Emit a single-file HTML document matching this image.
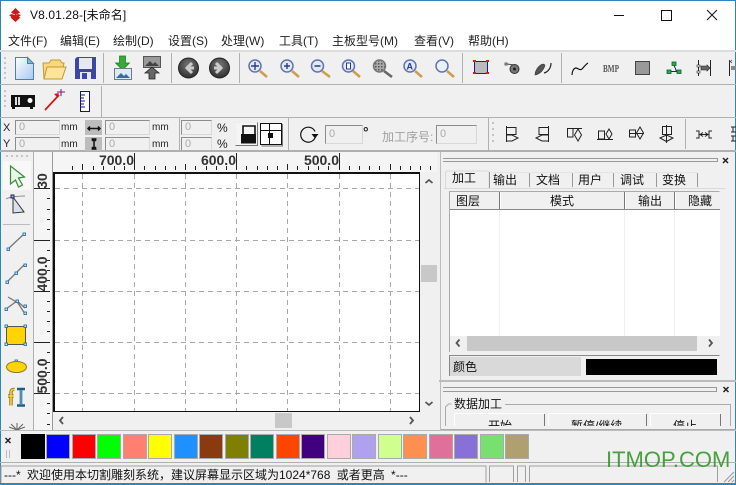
<!DOCTYPE html>
<html><head><meta charset="utf-8"><style>
html,body{margin:0;padding:0;width:736px;height:485px;overflow:hidden;background:#f0f0f0}
body{position:relative;font-family:"Liberation Sans","Noto Sans CJK SC",sans-serif;font-size:12px;color:#222}
.a{position:absolute;white-space:nowrap}
.r{position:absolute}
.inp{position:absolute;background:#f0f0f0;border:1px solid #8c8c8c;border-right-color:#d8d8d8;border-bottom-color:#d8d8d8;box-sizing:border-box;color:#aaa;font-size:11px;line-height:13px;padding-left:3px}
.m{font-size:12px;line-height:16px;top:33px}
.rl{font:bold 14px "Liberation Sans",sans-serif;line-height:16px;color:#333;top:152px;text-align:right;width:50px}
.rv{position:absolute;width:0;height:0;left:41.500px}
.rv div{transform:translate(-50%,-50%) rotate(-90deg);width:44px;text-align:center;font:bold 14px "Liberation Sans",sans-serif;line-height:16px;color:#333;white-space:nowrap}
svg{position:absolute;left:0;top:0}
</style></head><body>
<div class="r" style="left:0;top:0;width:736px;height:50px;background:#fff"></div>
<div class="a" style="left:30px;top:7px;font-size:12px;line-height:16px;color:#111;letter-spacing:.12px">V8.01.28-[未命名]</div>
<div class="a m" style="left:8px">文件(F)</div>
<div class="a m" style="left:60px">编辑(E)</div>
<div class="a m" style="left:113px">绘制(D)</div>
<div class="a m" style="left:168px">设置(S)</div>
<div class="a m" style="left:221px">处理(W)</div>
<div class="a m" style="left:279px">工具(T)</div>
<div class="a m" style="left:332px">主板型号(M)</div>
<div class="a m" style="left:414px">查看(V)</div>
<div class="a m" style="left:468px">帮助(H)</div>

<!-- canvas background etc -->
<div class="r" style="left:33px;top:152px;width:404px;height:20px;background:#f5f5f5"></div>
<div class="r" style="left:33px;top:172px;width:19px;height:258px;background:#f5f5f5"></div>
<div class="r" style="left:53px;top:172px;width:367px;height:240px;background:#fff;border-top:2px solid #111;border-left:2px solid #111;border-right:1px solid #111;border-bottom:1px solid #111;box-sizing:border-box"></div>
<div class="r" style="left:450px;top:209px;width:270px;height:127px;background:#fff"></div>
<div class="r" style="left:450px;top:357px;width:131px;height:19px;background:#d9d9d9"></div>
<div class="r" style="left:586px;top:359px;width:131px;height:16px;background:#000"></div>
<div class="r" style="left:467px;top:336px;width:230px;height:15px;background:#c8c8c8"></div>
<div class="r" style="left:421px;top:265px;width:16px;height:17px;background:#c8c8c8"></div>
<div class="r" style="left:275px;top:413px;width:17px;height:15px;background:#c8c8c8"></div>

<!-- inputs -->
<div class="inp" style="left:15px;top:120px;width:45px;height:15px">0</div>
<div class="inp" style="left:15px;top:137px;width:45px;height:14px">0</div>
<div class="inp" style="left:105px;top:120px;width:45px;height:15px">0</div>
<div class="inp" style="left:105px;top:137px;width:45px;height:14px">0</div>
<div class="inp" style="left:181px;top:120px;width:31px;height:15px">0</div>
<div class="inp" style="left:181px;top:137px;width:31px;height:14px">0</div>
<div class="inp" style="left:325px;top:125px;width:38px;height:19px;line-height:17px">0</div>
<div class="inp" style="left:436px;top:125px;width:41px;height:19px;line-height:17px">0</div>
<div class="a" style="left:3px;top:122px;font-size:11px;line-height:13px">X</div>
<div class="a" style="left:3px;top:138px;font-size:11px;line-height:13px">Y</div>
<div class="a" style="left:61px;top:121px;font-size:10px;line-height:13px">mm</div>
<div class="a" style="left:61px;top:138px;font-size:10px;line-height:13px">mm</div>
<div class="a" style="left:152px;top:121px;font-size:10px;line-height:13px">mm</div>
<div class="a" style="left:152px;top:138px;font-size:10px;line-height:13px">mm</div>
<div class="a" style="left:217px;top:122px;font-size:12px;line-height:13px">%</div>
<div class="a" style="left:217px;top:138px;font-size:12px;line-height:13px">%</div>
<div class="a" style="left:363px;top:125px;font-size:14px;line-height:14px;font-weight:bold">°</div>
<div class="a" style="left:382px;top:129px;font-size:12px;line-height:16px;color:#a0a0a0">加工序号:</div>

<!-- rulers -->
<div class="a rl" style="left:84px">700.0</div>
<div class="a rl" style="left:186px">600.0</div>
<div class="a rl" style="left:289px">500.0</div>
<div class="rv" style="top:180.500px"><div>30</div></div>
<div class="rv" style="top:273.500px"><div>400.0</div></div>
<div class="rv" style="top:375.500px"><div>500.0</div></div>

<!-- tabs text -->
<div class="a" style="left:452px;top:170px;font-size:12px;line-height:16px;color:#111">加工</div>
<div class="a" style="left:493px;top:172px;font-size:12px;line-height:16px;color:#111">输出</div>
<div class="a" style="left:536px;top:172px;font-size:12px;line-height:16px;color:#111">文档</div>
<div class="a" style="left:578px;top:172px;font-size:12px;line-height:16px;color:#111">用户</div>
<div class="a" style="left:620px;top:172px;font-size:12px;line-height:16px;color:#111">调试</div>
<div class="a" style="left:662px;top:172px;font-size:12px;line-height:16px;color:#111">变换</div>
<div class="a" style="left:456px;top:194px;font-size:12px;line-height:15px;color:#111">图层</div>
<div class="a" style="left:550px;top:194px;font-size:12px;line-height:15px;color:#111">模式</div>
<div class="a" style="left:638px;top:194px;font-size:12px;line-height:15px;color:#111">输出</div>
<div class="a" style="left:688px;top:194px;font-size:12px;line-height:15px;color:#111">隐藏</div>
<div class="a" style="left:453px;top:359px;font-size:12px;line-height:16px;color:#111">颜色</div>
<div class="a" style="left:454px;top:396px;font-size:12px;line-height:16px;color:#111">数据加工</div>
<div class="r" style="left:443px;top:413px;width:290px;height:13px;overflow:hidden">
<div class="a" style="left:45px;top:5px;font-size:12px;line-height:16px;color:#111">开始</div>
<div class="a" style="left:128px;top:5px;font-size:12px;line-height:16px;color:#111">暂停/继续</div>
<div class="a" style="left:230px;top:5px;font-size:12px;line-height:16px;color:#111">停止</div>
</div>

<!-- status -->
<div class="a" style="left:4px;top:467px;font-size:12px;line-height:16px;color:#111;word-spacing:3px">---* 欢迎使用本切割雕刻系统，建议屏幕显示区域为1024*768 或者更高 *---</div>

<svg width="736" height="485" viewBox="0 0 736 485" xmlns="http://www.w3.org/2000/svg">
<defs>
<radialGradient id="g" cx=".5" cy=".35" r=".7"><stop offset="0" stop-color="#777"/><stop offset="1" stop-color="#2a2a2a"/></radialGradient>
<linearGradient id="pg" x1="0" y1="0" x2="1" y2="1"><stop offset="0" stop-color="#fff"/><stop offset="1" stop-color="#a8c8ee"/></linearGradient>
<pattern id="dots" width="3" height="3" patternUnits="userSpaceOnUse"><rect width="3" height="3" fill="#aaa"/><rect width="1.500" height="1.500" fill="#555"/></pattern>
</defs>
<!-- window frame -->
<rect x="0" y="0" width="736" height="1" fill="#2e86c1"/><rect x="0" y="0" width="1" height="485" fill="#2e86c1"/><rect x="735" y="0" width="1" height="485" fill="#2e86c1"/><rect x="0" y="483" width="736" height="2" fill="#2e86c1"/>
<!-- logo -->
<g fill="#d01818"><path d="M15.500 8l4.500 4.500-2.500 1.500h-4l-2.500-1.500z"/><path d="M9 15l3-1 3 1.200 3-1.200 3 1-3 2.500h-6z"/><path d="M15.500 22l-5-4.500 2.500-1h5l2.500 1z"/><rect x="14.700" y="9" width="1.600" height="12"/></g>
<!-- win controls -->
<rect x="614" y="15" width="10" height="1" fill="#111"/>
<rect x="661.500" y="10.500" width="10" height="10" fill="none" stroke="#111"/>
<path d="M707 10l10 10M717 10l-10 10" stroke="#111" fill="none"/>
<!-- bars -->
<g fill="#b0b0b0">
<rect x="0" y="50" width="736" height="2" fill="#dcdcdc"/>
<rect x="0" y="84" width="736" height="1"/>
<rect x="0" y="117" width="736" height="1"/>
<rect x="103" y="53" width="1" height="30"/><rect x="171" y="53" width="1" height="30"/><rect x="239" y="53" width="1" height="30"/><rect x="462" y="53" width="1" height="30"/><rect x="561" y="53" width="1" height="30"/>
<rect x="101" y="86" width="1" height="31"/>
<rect x="179" y="118" width="1" height="32"/><rect x="288" y="118" width="1" height="32"/><rect x="488" y="118" width="1" height="32"/><rect x="685" y="119" width="1" height="30"/>
<rect x="0" y="150" width="736" height="2"/>
</g>
<g fill="#c4c4c4"><rect x="4" y="57" width="2" height="2"/><rect x="4" y="62" width="2" height="2"/><rect x="4" y="67" width="2" height="2"/><rect x="4" y="72" width="2" height="2"/><rect x="4" y="77" width="2" height="2"/><rect x="4" y="90" width="2" height="2"/><rect x="4" y="95" width="2" height="2"/><rect x="4" y="100" width="2" height="2"/><rect x="4" y="105" width="2" height="2"/><rect x="492" y="122" width="2" height="2"/><rect x="492" y="128" width="2" height="2"/><rect x="492" y="134" width="2" height="2"/><rect x="492" y="140" width="2" height="2"/></g>

<!-- toolbar 1 icons -->
<path d="M15.500 57.500h12l6 6v16h-18z" fill="url(#pg)" stroke="#4a7fb8"/><path d="M27.500 57.500v6h6z" fill="#8ab4e0" stroke="#4a7fb8"/>
<path d="M44 79l-1-16h6l2-3h9l2 3h2l-3 16z" fill="#f8d878" stroke="#c09838"/><path d="M44 79l3-12h19l-4 12z" fill="#fde49a" stroke="#c09838"/>
<path d="M75 59l2-2h19v22h-21z" fill="#3a46a8"/><rect x="79" y="58" width="13" height="11" fill="#e8e8f0"/><rect x="80" y="72" width="11" height="7" fill="#e8e8f0"/><rect x="82" y="73" width="5" height="6" fill="#3a46a8"/>
<path d="M119.500 56h6v7h4l-7 7-7-7h4z" fill="#38a838" stroke="#1c7a1c" stroke-width=".7"/>
<rect x="114.500" y="68.500" width="17" height="11" fill="#dceaf6" stroke="#6e7a84"/><path d="M116 78l5-5 3 3 2-2 4 4z" fill="#3c6a9c"/>
<rect x="143.500" y="56.500" width="17" height="11" fill="#9a9a9a" stroke="#555"/><path d="M145 66l5-5 3 3 2-2 4 4z" fill="#444"/><path d="M152 67l7 6h-4v6h-6v-6h-4z" fill="#666" stroke="#222" stroke-width=".8"/>
<circle cx="188.500" cy="68" r="10" fill="url(#g)" stroke="#222"/><path d="M192 63l-5 5 5 5M187 68h7" stroke="#ccc" stroke-width="3" fill="none"/>
<circle cx="219.500" cy="68" r="10" fill="url(#g)" stroke="#222"/><path d="M216 63l5 5-5 5M221 68h-7" stroke="#ccc" stroke-width="3" fill="none"/>
<!-- magnifiers -->
<g stroke="#caa050" stroke-width="2.600"><path d="M260 71l7 6M292 71l7 6M322 71l8 6M353 71l7 6M415 71l7 6M447 71l7 6"/></g>
<path d="M384 71l8 6" stroke="#666" stroke-width="2.600"/>
<g fill="#e2e8f6" stroke="#6272b0" stroke-width="1.500">
<circle cx="255" cy="66" r="6"/><circle cx="287" cy="66" r="6"/><circle cx="317.500" cy="66" r="6"/><circle cx="348.500" cy="66" r="6"/><circle cx="410" cy="66" r="6"/><circle cx="442" cy="66" r="6" fill="#e8f0fc"/>
</g>
<circle cx="379.500" cy="66" r="6" fill="url(#dots)" stroke="#777" stroke-width="1.500"/>
<path d="M251 66h8M255 62v8M284 66h6M287 63v6M314.500 66h6" stroke="#22408a" stroke-width="1.400"/>
<rect x="346.500" y="63" width="4" height="6" fill="#fff" stroke="#22408a"/>
<text x="406.500" y="69.500" font-family="Liberation Sans" font-weight="bold" font-size="9" fill="#22408a">A</text>
<!-- node tools -->
<rect x="474.500" y="61.500" width="13" height="12" fill="#bbb" stroke="#1a1a9a"/><g fill="#d02020"><rect x="473" y="60" width="3" height="2"/><rect x="486" y="60" width="3" height="2"/><rect x="473" y="72" width="3" height="2"/><rect x="486" y="72" width="3" height="2"/></g>
<rect x="505" y="63" width="2" height="2" fill="#fff" stroke="#222" stroke-width=".7"/><path d="M507 64l7 1" stroke="#444"/><circle cx="514.500" cy="69" r="4.500" fill="#777" stroke="#333"/><circle cx="514.500" cy="69" r="1.500" fill="#222"/>
<path d="M535 75c0-5 4-10 8-11l2 1c-1 5-5 9-10 10z" fill="#555" stroke="#333" stroke-width=".6"/><path d="M544 73c4-1 7-5 7-10" stroke="#222" fill="none" stroke-width="1.200"/>
<path d="M572 75c0-4 2-7 4-7s4 3 6 1 4-5 6-6" stroke="#111" fill="none" stroke-width="1.200"/>
<text x="603" y="72" font-family="Liberation Serif" font-size="10" font-weight="bold" fill="#555" textLength="16" lengthAdjust="spacingAndGlyphs">BMP</text>
<rect x="635.500" y="61.500" width="14" height="13" fill="#999" stroke="#444"/>
<path d="M674 65l2.500 6.500M669 71.500h10" stroke="#1a1a9a" fill="none"/><g fill="#3a3" stroke="#063" stroke-width=".8"><rect x="672" y="62" width="4" height="3.500"/><rect x="667" y="70" width="4" height="3.500"/><rect x="677" y="70" width="4" height="3.500"/></g>
<path d="M698.500 60v16M710.500 60v16" stroke="#222"/><rect x="697" y="65" width="3" height="2" fill="#fff" stroke="#222" stroke-width=".6"/><rect x="697" y="71" width="3" height="2" fill="#fff" stroke="#222" stroke-width=".6"/><path d="M701 66h6v-1l3 3-3 3v-1h-6z" fill="#666" stroke="#222" stroke-width=".6"/>
<path d="M729.500 60v16" stroke="#222"/><rect x="731" y="66" width="5" height="4" fill="#888"/><path d="M729 60l3 3M732 60l-3 3" stroke="#444" stroke-width=".7"/>

<!-- toolbar 2 -->
<path d="M11 95h24v12h-2v2h-3v-2h-15v2h-3v-2h-1z" fill="#111"/><rect x="15" y="97" width="2" height="8" fill="#ddd"/><rect x="18" y="97" width="2" height="8" fill="#ddd"/><circle cx="30" cy="100.500" r="2.500" fill="#fff"/>
<path d="M45 110l14-15" stroke="#d01818" stroke-width="1.800"/><path d="M59 93l-5 1 3 3z" fill="#d01818"/><path d="M57 92h8M61 89v7" stroke="#80108a"/>
<rect x="80.500" y="91.500" width="9" height="20" fill="#fff" stroke="#14147a"/><path d="M81 95h4M81 98h3M81 101h4M81 104h3M81 107h4" stroke="#14147a"/>

<!-- toolbar 3 buttons -->
<rect x="85" y="120" width="17" height="31" fill="#bcbcbc"/><rect x="85" y="135" width="17" height="2" fill="#f0f0f0"/>
<path d="M88 128.500h12M90 126.500l-2 2 2 2M98 126.500l2 2-2 2" stroke="#111" fill="none" stroke-width="1.500"/><path d="M94 139v10M92 141l2-2 2 2M92 147l2 2 2-2M91.500 139h5M91.500 149h5" stroke="#111" fill="none" stroke-width="1.500"/>
<rect x="235.500" y="122.500" width="22" height="23" fill="#f4f4f4"/><path d="M235.500 145.500v-23h22" stroke="#eee" fill="none"/><path d="M235.500 145.500h22v-23" stroke="#777" fill="none"/>
<rect x="241" y="134" width="15" height="9.500" fill="#111"/><path d="M243 134v-8h12v8" stroke="#111" fill="none" stroke-width="1.600"/>
<rect x="260.500" y="123.500" width="21" height="21" fill="#fff" stroke="#111"/><path d="M261 130.500h20M269.500 124v20" stroke="#111"/><rect x="268" y="133" width="5" height="5" fill="#111"/><path d="M282.500 124v22h-21" stroke="#777" fill="none"/>
<path d="M315 131.500a7.500 7.500 0 1 0 0.500 5" stroke="#111" fill="none" stroke-width="1.200"/><path d="M311.500 134h7l-3.500 4.500z" fill="#111"/>

<!-- align icons -->
<g fill="none" stroke="#222" stroke-width="1">
<path d="M506.500 126v16M507 127.500h9v7h-9M507 135l5 0 6 3-6 3h-5"/>
<path d="M548.500 126v16M548 127.500h-9v7h9M548 135h-6l-6 3 6 3h6"/>
<path d="M567 128.500h15M567.500 129v8h5.500v-8M578 129l3.500 6-3.500 6-3.500-6z"/>
<path d="M597 139.500h16M598.500 131h6v8h-6zM609 129l3 5-3 5-3-5z"/>
<path d="M629 133.500h15M629.500 130h6v7h-6zM640 127l3.500 6-3.500 6-3.500-6z"/>
<path d="M666.500 125v18M662.500 126.500h9v8h-9zM660 138l6.500-3 6.500 3-6.500 3.500z"/>
<path d="M696 131h3v7h-3M699 134.500h9M703 132.500l-3 2 3 2M705 132.500l3 2-3 2M712 131h-3v7h3"/>
<path d="M731 127h5M733 127v5M731 132h5M731 136h5M733 136v5M731 141h5"/>
</g>

<!-- left toolbar -->
<rect x="33" y="152" width="1" height="278" fill="#b0b0b0"/>
<rect x="3" y="161" width="28" height="29" fill="#f8f8f8"/>
<g fill="#c4c4c4"><rect x="6" y="155" width="2" height="2"/><rect x="11" y="155" width="2" height="2"/><rect x="16" y="155" width="2" height="2"/><rect x="21" y="155" width="2" height="2"/><rect x="26" y="155" width="2" height="2"/></g>
<path d="M10.500 166l14 11-6 1 4 7-4 2-3-7-5 4z" fill="#e8f8e8" stroke="#3a8a3a" stroke-width="1.200"/>
<path d="M13 197l11 15-11 1z" fill="#dce0ee" stroke="#333"/><path d="M6 199c3-2 12-3 19-3" stroke="#888" fill="none"/><rect x="11" y="195" width="3" height="3" fill="#9ab" stroke="#226"/>
<rect x="3" y="224" width="27" height="1" fill="#bbb"/>
<g stroke="#777" stroke-width="1.300" fill="none"><path d="M8 249l16-15M7 282l9-9 9-9M6 309l11-8 8 7M8 297l10 6 7 11"/></g>
<g fill="#cfe6f4" stroke="#2f6f9f" stroke-width=".9"><rect x="7" y="248" width="2.500" height="2.500"/><rect x="23" y="233" width="2.500" height="2.500"/><rect x="6" y="281" width="2.500" height="2.500"/><rect x="15" y="272" width="2.500" height="2.500"/><rect x="24" y="264" width="2.500" height="2.500"/><rect x="5" y="308" width="2.500" height="2.500"/><rect x="24" y="312" width="2.500" height="2.500"/><rect x="24" y="305" width="2.500" height="2.500"/><rect x="16" y="300" width="2.500" height="2.500"/></g>
<rect x="6.500" y="326.500" width="19" height="18" fill="#ffd400" stroke="#555"/>
<g fill="#cfe6f4" stroke="#2f6f9f" stroke-width=".9"><rect x="5" y="325" width="2.500" height="2.500"/><rect x="24" y="325" width="2.500" height="2.500"/><rect x="5" y="343" width="2.500" height="2.500"/><rect x="24" y="343" width="2.500" height="2.500"/><rect x="15" y="360" width="2.500" height="2.500"/></g>
<ellipse cx="16.500" cy="367" rx="10" ry="5.500" fill="#ffd400" stroke="#8a7a20"/>
<path d="M14.500 389.500c-2.500-.5-3.500 1-3.500 3v13M8 396h5.500" fill="none" stroke="#8a7820" stroke-width="3.400"/><path d="M14.500 389.500c-2.500-.5-3.500 1-3.500 3v13M8 396h5.500" fill="none" stroke="#ffd030" stroke-width="1.600"/>
<path d="M17 389h8M17 405.500h8M21 389v16.500" stroke="#205c88" stroke-width="2.600" fill="none"/><path d="M21 390v15" stroke="#7ac0e8" stroke-width="1" fill="none"/>
<path d="M17 430l-6-6M17 430l6-6M17 430v-7M17 430l-8-3M17 430l8-3" stroke="#666" fill="none"/>

<!-- ruler ticks top -->
<rect x="52" y="152" width="1" height="20" fill="#999"/>
<g transform="translate(0,-2)"><path d="M72.500 168v4M82.500 166v6M93.500 168v4M103.500 168v4M114.500 168v4M124.500 168v4M134.500 155v17M144.500 168v4M155.500 168v4M165.500 168v4M175.500 168v4M185.500 166v6M195.500 168v4M206.500 168v4M216.500 168v4M226.500 168v4M236.500 155v17M246.500 168v4M257.500 168v4M267.500 168v4M277.500 168v4M287.500 166v6M297.500 168v4M308.500 168v4M318.500 168v4M328.500 168v4M339.500 155v17M349.500 168v4M359.500 168v4M369.500 168v4M379.500 168v4M390.500 166v6M400.500 168v4M410.500 168v4M420.500 168v4M430.500 168v4" stroke="#222" fill="none"/></g>
<path d="M34 188.500h16M47 198.500h3M47 209.500h3M47 219.500h3M47 229.500h3M34 240.500h16M47 250.500h3M47 260.500h3M47 270.500h3M47 280.500h3M34 291.500h16M47 301.500h3M47 311.500h3M47 321.500h3M47 331.500h3M34 342.500h16M47 352.500h3M47 362.500h3M47 372.500h3M47 382.500h3M34 393.500h16M47 403.500h3M47 413.500h3M47 424.500h3" stroke="#222" fill="none"/>
<rect x="52" y="172" width="1" height="258" fill="#999"/>

<!-- dashed grid -->
<g stroke="#a8a8a8" stroke-dasharray="5 4" fill="none">
<path d="M82.500 174v237M134.500 174v237M185.500 174v237M236.500 174v237M287.500 174v237M339.500 174v237M390.500 174v237"/>
<path d="M55 188.500h364M55 240.500h364M55 291.500h364M55 342.500h364M55 393.500h364"/>
</g>
<!-- scroll arrows -->
<g fill="none" stroke="#555" stroke-width="1.800"><path d="M63 417l-3 3.500 3 3.500M410 417l3 3.500-3 3.500M425.500 183l3.500-3 3.500 3M425.500 402l3.500 3 3.500-3"/>
<path d="M459.500 339.500l-3 3.500 3 3.500M709 339.500l3 3.500-3 3.500"/></g>

<!-- right panel -->
<rect x="440" y="152" width="1" height="278" fill="#bbb"/>
<path d="M443 158.500h274M443 161.500h274M717.500 158v4" stroke="#999" fill="none"/>
<path d="M723 158l5 5M728 158l-5 5" stroke="#222" stroke-width="1.500"/>
<!-- tabs -->
<path d="M445.500 188v-16l1.500-1h41l1 1v16" fill="none" stroke="#dadada"/><path d="M489.500 172v16" stroke="#999"/>
<path d="M491 172.500h38M531 172.500h41M574 172.500h39M615 172.500h41M658 172.500h39" fill="none" stroke="#e4e4e4"/>
<path d="M529.500 173v14M572.500 173v14M613.500 173v14M656.500 173v14M697.500 173v14" stroke="#999" fill="none"/>
<rect x="444" y="188" width="282" height="1" fill="#dadada"/>
<!-- table -->
<path d="M449.500 352v-160.500h270" fill="none" stroke="#aaa"/>
<path d="M450 209.500h270" stroke="#888"/>
<path d="M499.500 192v17M624.500 192v17M674.500 192v17" stroke="#777" fill="none"/>
<path d="M500.500 192v17M625.500 192v17M675.500 192v17" stroke="#fff" fill="none"/>
<path d="M499.500 210v126M624.500 210v126M674.500 210v126" stroke="#efefef" fill="none"/>
<path d="M449.500 376v-20.500h270" stroke="#888" fill="none"/>
<!-- panel 2 -->
<rect x="439" y="380" width="297" height="2" fill="#bbb"/>
<path d="M443 387.500h273M443 391.500h273M716.500 387v5" stroke="#999" fill="none"/>
<path d="M723.500 387l5 5M728.500 387l-5 5" stroke="#222" stroke-width="1.500"/>
<path d="M445.500 426v-19l3-3h3M505 404.500h225.500v21.500" stroke="#aaa" fill="none"/>
<path d="M454.500 426v-12.500h90M548.500 426v-12.500h98M650.500 426v-12.500h69" fill="none" stroke="#fff"/>
<path d="M544.500 414v12M646.500 414v12M720.500 414v12" stroke="#777" fill="none"/>
<rect x="441" y="429" width="295" height="1" fill="#aaa"/>
<rect x="0" y="430" width="736" height="1" fill="#bbb"/>

<!-- color bar -->
<path d="M5.500 438l5 5M10.500 438l-5 5" stroke="#222" stroke-width="1.500"/>
<path d="M6.500 450v8M9.500 450v8" stroke="#bbb"/>
<g stroke="#aaa" stroke-width="1">
<rect x="21.500" y="434.500" width="23" height="24" fill="#000" stroke="#000"/>
<rect x="46.500" y="434.500" width="23" height="24" fill="#0000ff"/>
<rect x="72.500" y="434.500" width="23" height="24" fill="#ff0000"/>
<rect x="97.500" y="434.500" width="23" height="24" fill="#00ff00"/>
<rect x="123.500" y="434.500" width="23" height="24" fill="#ff8070"/>
<rect x="148.500" y="434.500" width="23" height="24" fill="#ffff00"/>
<rect x="174.500" y="434.500" width="23" height="24" fill="#1e90ff"/>
<rect x="199.500" y="434.500" width="23" height="24" fill="#8b3a10"/>
<rect x="225.500" y="434.500" width="23" height="24" fill="#808000"/>
<rect x="250.500" y="434.500" width="23" height="24" fill="#008060"/>
<rect x="276.500" y="434.500" width="23" height="24" fill="#ff4500"/>
<rect x="301.500" y="434.500" width="23" height="24" fill="#400080"/>
<rect x="327.500" y="434.500" width="23" height="24" fill="#ffd0dc"/>
<rect x="352.500" y="434.500" width="23" height="24" fill="#b0a0f0"/>
<rect x="378.500" y="434.500" width="23" height="24" fill="#d0ff90"/>
<rect x="403.500" y="434.500" width="23" height="24" fill="#ff9050"/>
<rect x="429.500" y="434.500" width="23" height="24" fill="#e07098"/>
<rect x="454.500" y="434.500" width="23" height="24" fill="#8870d8"/>
<rect x="480.500" y="434.500" width="23" height="24" fill="#78e070"/>
<rect x="505.500" y="434.500" width="23" height="24" fill="#b0a070"/>
</g>
<!-- status -->
<rect x="0" y="462" width="736" height="1" fill="#b0b0b0"/>
<path d="M1 482.500v-16.500h485v16.500M489.500 482v-16h24v16M517.500 482v-16h8v16M529.500 482v-16h188v16" stroke="#a0a0a0" fill="none"/>
<path d="M724 482l10-10M728 482l6-6M732 482l2-2" stroke="#999" fill="none"/>
<text x="606" y="467" font-family="Liberation Sans" font-size="22" fill="#3a9a30" opacity=".92">ITMOP.COM</text>
</svg>
</body></html>
